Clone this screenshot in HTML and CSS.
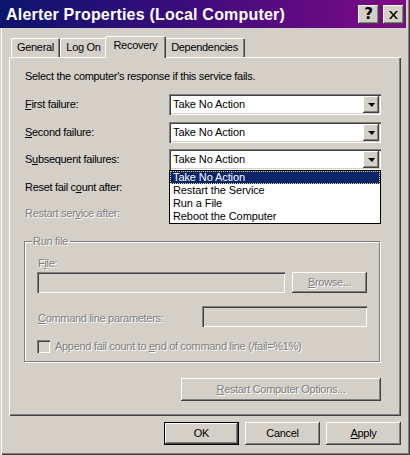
FILE: index.html
```html
<!DOCTYPE html>
<html>
<head>
<meta charset="utf-8">
<link rel="stylesheet" href="styles.css">
</head>
<body>
<div class="window">
  <div class="titlebar">
    <span class="title">Alerter Properties (Local Computer)</span>
    <div class="caps">
      <div class="cap cap-help">?</div>
      <div class="cap cap-close">
        <svg width="9" height="8" viewBox="0 0 9 8"><path d="M0 0h2l2.5 3 2.5-3h2l-3.5 4 3.5 4h-2l-2.5-3-2.5 3h-2l3.5-4z" fill="#000"/></svg>
      </div>
    </div>
  </div>

  <div class="tabs">
    <div class="tab t-general">General</div>
    <div class="tab t-logon">Log On</div>
    <div class="tab t-recovery selected">Recovery</div>
    <div class="tab t-deps">Dependencies</div>
  </div>

  <div class="panel">
    <div class="intro">Select the computer's response if this service fails.</div>

    <div class="row r1">
      <span class="lbl"><u>F</u>irst failure:</span>
      <div class="combo"><span class="combo-text">Take No Action</span><span class="arrow"><i></i></span></div>
    </div>
    <div class="row r2">
      <span class="lbl"><u>S</u>econd failure:</span>
      <div class="combo"><span class="combo-text">Take No Action</span><span class="arrow"><i></i></span></div>
    </div>
    <div class="row r3">
      <span class="lbl">S<u>u</u>bsequent failures:</span>
      <div class="combo"><span class="combo-text">Take No Action</span><span class="arrow"><i></i></span></div>
    </div>

    <div class="line reset">Reset fail c<u>o</u>unt after:</div>
    <div class="line restart disabled">Restart ser<u>v</u>ice after:</div>

    <div class="group">
      <span class="legend disabled">Run file</span>
      <div class="g-label disabled">F<u>i</u>le:</div>
      <div class="file-row">
        <div class="field file-field"></div>
        <div class="btn browse"><span class="disabled"><u>B</u>rowse...</span></div>
      </div>
      <div class="cmd-row">
        <span class="disabled"><u>C</u>ommand line parameters:</span>
        <div class="field cmd-field"></div>
      </div>
      <div class="check-row">
        <span class="checkbox"></span>
        <span class="disabled">Append fail count to <u>e</u>nd of command line (/fail=%1%)</span>
      </div>
    </div>

    <div class="restart-opts">
      <div class="btn wide"><span class="disabled"><u>R</u>estart Computer Options...</span></div>
    </div>

    <ul class="droplist">
      <li class="sel"><span>Take No Action</span></li>
      <li>Restart the Service</li>
      <li>Run a File</li>
      <li>Reboot the Computer</li>
    </ul>
  </div>

  <div class="footer">
    <div class="btn default"><span>OK</span></div>
    <div class="btn"><span>Cancel</span></div>
    <div class="btn"><span><u>A</u>pply</span></div>
  </div>
</div>
</body>
</html>
```

FILE: styles.css
```css
* { box-sizing: border-box; }

body {
  margin: 0;
  background: #d4d0c8;
  font-family: "Liberation Sans", Arial, sans-serif;
  font-size: 11px;
  line-height: 13px;
  letter-spacing: -0.3px;
  color: #000;
}

u { text-decoration: underline; text-underline-offset: 1px; }

.window {
  width: 410px;
  height: 455px;
  background: #d4d0c8;
  box-shadow: inset 1px 0 #d4d0c8, inset 2px 0 #fff,
              inset -1px -1px #404040, inset -2px -2px #808080;
  display: flex;
  flex-direction: column;
}

/* Title bar */
.titlebar {
  height: 28px;
  margin: 0 4px 0 0;
  background: linear-gradient(90deg, #0c146e 0%, #3a0c7c 45%, #800a86 100%);
  display: flex;
  align-items: center;
  padding: 0 2px 0 6px;
}
.title {
  flex: 1;
  color: #fff;
  font-weight: bold;
  font-size: 16px;
  letter-spacing: 0.2px;
  line-height: 18px;
  white-space: nowrap;
  padding-top: 1px;
}
.caps { display: flex; gap: 4px; margin-top: 1px; }
.cap {
  width: 21px;
  height: 19px;
  background: #d4d0c8;
  box-shadow: inset -1px -1px #404040, inset 1px 1px #fff, inset -2px -2px #808080;
  display: flex;
  align-items: center;
  justify-content: center;
}
.cap-help {
  font-weight: bold;
  font-size: 15px;
  line-height: 15px;
  letter-spacing: 0;
  font-family: "DejaVu Sans", sans-serif;
}

/* Tabs */
.tabs {
  display: flex;
  align-items: flex-end;
  height: 21px;
  margin-top: 8px;
  padding-left: 11px;
}
.tab {
  height: 19px;
  display: flex;
  align-items: center;
  justify-content: center;
  padding-bottom: 1px;
  box-shadow: inset 1px 1px #fff, inset -1px 0 #404040, inset -2px 0 #808080;
  border-top-left-radius: 2px;
  border-top-right-radius: 2px;
  position: relative;
}
.t-general { width: 49px; }
.t-logon { width: 47px; }
.t-recovery { width: 57px; }
.t-deps { width: 81px; }
.tab.selected {
  height: 22px;
  width: 61px;
  margin: 0 -2px -1px -2px;
  z-index: 1;
  background: #d4d0c8;
  padding-bottom: 4px;
  box-shadow: inset 1px 1px #fff, inset -1px 0 #404040, inset -2px 0 #808080;
}

/* Panel */
.panel {
  position: relative;
  margin-left: 9px;
  width: 392px;
  height: 359px;
  padding: 13px 20px 0 16px;
  box-shadow: inset 1px 1px #fff, inset -1px -1px #404040, inset -2px -2px #808080;
}
.intro { height: 13px; }

.row {
  display: flex;
  align-items: center;
  height: 21px;
}
.r1 { margin-top: 11px; }
.r2 { margin-top: 7px; }
.r3 { margin-top: 6px; }
.lbl { width: 144px; }

.combo {
  width: 212px;
  height: 21px;
  background: #fff;
  box-shadow: inset 1px 1px #808080, inset 2px 2px #404040, inset -1px -1px #fff, inset -2px -2px #d4d0c8;
  display: flex;
  align-items: center;
  padding: 2px;
}
.combo-text { flex: 1; padding-left: 2px; letter-spacing: -0.1px; }
.arrow {
  width: 16px;
  height: 17px;
  background: #d4d0c8;
  box-shadow: inset -1px -1px #404040, inset 1px 1px #fff, inset -2px -2px #808080;
  display: flex;
  align-items: center;
  justify-content: center;
}
.arrow i {
  width: 0;
  height: 0;
  border-left: 4px solid transparent;
  border-right: 3px solid transparent;
  border-top: 4px solid #000;
  margin: 1px 0 0 0;
}

.line { height: 13px; }
.reset { margin-top: 11px; }
.restart { margin-top: 13px; }

.disabled {
  color: #808080;
  text-shadow: 1px 1px 0 #fff;
}

/* Group box */
.group {
  position: relative;
  margin-top: 21px;
  margin-left: -1px;
  width: 356px;
  height: 121px;
  border: 1px solid #808080;
  box-shadow: 1px 1px 0 #fff, inset 1px 1px 0 #fff;
  padding: 15px 0 0 12px;
}
.legend {
  position: absolute;
  top: -7px;
  left: 7px;
  padding: 0 2px 0 1px;
  background: #d4d0c8;
}
.g-label { margin-left: 1px; height: 13px; }
.file-row {
  display: flex;
  margin-top: 2px;
  gap: 7px;
}
.field {
  height: 21px;
  background: #d4d0c8;
  box-shadow: inset 1px 1px #808080, inset 2px 2px #404040, inset -1px -1px #fff, inset -2px -2px #d4d0c8;
}
.file-field { width: 248px; }

.btn {
  width: 75px;
  height: 23px;
  background: #d4d0c8;
  box-shadow: inset -1px -1px #404040, inset 1px 1px #fff, inset -2px -2px #808080;
  display: flex;
  align-items: center;
  justify-content: center;
}
.browse { height: 21px; }

.cmd-row {
  display: flex;
  align-items: center;
  margin-top: 13px;
  padding-left: 1px;
}
.cmd-row span { width: 164px; padding-top: 3px; }
.cmd-field { width: 165px; }

.check-row {
  display: flex;
  align-items: center;
  gap: 5px;
  margin-top: 13px;
}
.checkbox {
  width: 13px;
  height: 13px;
  box-shadow: inset 1px 1px #808080, inset 2px 2px #404040, inset -1px -1px #fff, inset -2px -2px #d4d0c8;
}

.restart-opts {
  display: flex;
  justify-content: flex-end;
  margin-top: 16px;
}
.btn.wide { width: 200px; }

/* Dropdown list */
.droplist {
  position: absolute;
  left: 160px;
  top: 113px;
  width: 212px;
  margin: 0;
  padding: 0;
  list-style: none;
  background: #fff;
  border: 1px solid #000;
}
.droplist li {
  height: 13px;
  padding-left: 3px;
  white-space: nowrap;
  letter-spacing: -0.1px;
}
.droplist li.sel {
  background: #0a246a;
  color: #fff;
  outline: 1px dotted #e8e090;
  outline-offset: -1px;
  padding-left: 3px;
}

/* Footer */
.footer {
  display: flex;
  justify-content: flex-end;
  gap: 6px;
  margin-top: 6px;
  padding-right: 9px;
}
.btn.default {
  box-shadow: inset 0 0 0 1px #000, inset -2px -2px #404040, inset 2px 2px #fff, inset -3px -3px #808080;
}
```
